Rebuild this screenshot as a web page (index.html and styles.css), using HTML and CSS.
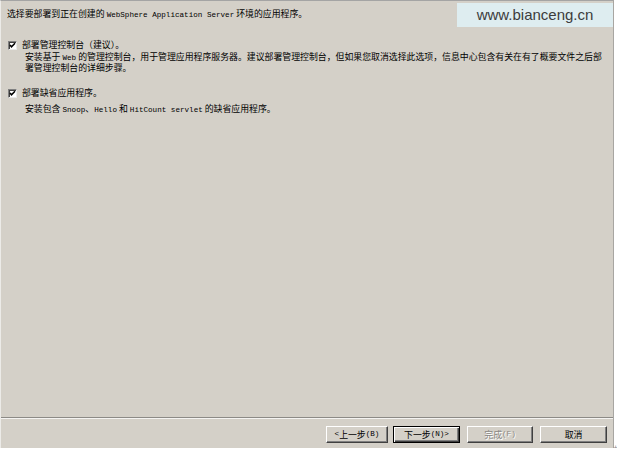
FILE: index.html
```html
<!DOCTYPE html>
<html lang="zh-CN">
<head>
<meta charset="utf-8">
<title>部署应用程序</title>
<link rel="stylesheet" href="styles.css">
</head>
<body>
<div class="dialog">
  <div class="content">
    <p class="intro">选择要部署到正在创建的 <span class="lat">WebSphere Application Server</span> 环境的应用程序。</p>

    <div class="option opt1">
      <div class="row">
        <span class="cb"><svg width="9" height="9" viewBox="0 0 9 9"><path d="M2 4 L3.5 5.8 L7 2.2" fill="none" stroke="#000" stroke-width="1.6"/></svg></span>
        <span class="label">部署管理控制台（建议）。</span>
      </div>
      <p class="desc">安装基于 <span class="lat">Web</span> 的管理控制台，用于管理应用程序服务器。建议部署管理控制台，但如果您取消选择此选项，信息中心包含有关在有了概要文件之后部<br>署管理控制台的详细步骤。</p>
    </div>

    <div class="option opt2">
      <div class="row">
        <span class="cb"><svg width="9" height="9" viewBox="0 0 9 9"><path d="M2 4 L3.5 5.8 L7 2.2" fill="none" stroke="#000" stroke-width="1.6"/></svg></span>
        <span class="label">部署缺省应用程序。</span>
      </div>
      <p class="desc desc2">安装包含 <span class="lat">Snoop</span>、<span class="lat">Hello</span> 和 <span class="lat">HitCount servlet</span> 的缺省应用程序。</p>
    </div>
  </div>

  <div class="footer">
    <button class="btn b1"><span class="lat">&lt;</span>上一步<span class="lat">(B)</span></button>
    <button class="btn b2 default">下一步<span class="lat">(N)&gt;</span></button>
    <button class="btn b3" disabled>完成<span class="lat">(F)</span></button>
    <button class="btn b4">取消</button>
  </div>

  <div class="watermark">www.bianceng.cn</div>
  <span class="grip">+</span>
</div>
</body>
</html>
```

FILE: styles.css
```css
html, body {
  margin: 0;
  padding: 0;
  background: #ffffff;
}

body {
  font-family: "Noto Sans CJK SC", "Liberation Sans", sans-serif;
  font-size: 8.9px;
  color: #000;
}

.dialog {
  position: relative;
  box-sizing: border-box;
  width: 614px;
  height: 448px;
  background: #d4d0c8;
  border-top: 1px solid #a4a4a4;
  border-left: 1px solid #ecebe8;
  border-right: 1px solid #a8a6a2;
  display: flex;
  flex-direction: column;
}

.lat {
  font-family: "Liberation Mono", monospace;
  font-size: 7.6px;
}

.content {
  flex: 1;
  padding: 8px 0 0 6px;
}

p {
  margin: 0;
}

.intro {
  line-height: 10px;
  white-space: nowrap;
}

.option .row {
  display: flex;
  align-items: center;
  height: 10px;
  line-height: 10px;
}

.opt1 {
  margin-top: 20px;
}

.opt2 {
  margin-top: 16px;
}

.cb {
  box-sizing: border-box;
  width: 9px;
  height: 9px;
  margin-left: 1px;
  background: #fff;
  border-top: 1px solid #808080;
  border-left: 1px solid #808080;
  border-right: 1px solid #e8e8e8;
  border-bottom: 1px solid #e8e8e8;
  box-shadow: inset 1px 1px 0 #404040;
  display: flex;
  align-items: center;
  justify-content: center;
  overflow: hidden;
}

.cb svg {
  display: block;
  flex: none;
}

.label {
  margin-left: 5px;
}

.desc {
  margin-top: 2px;
  padding-left: 18px;
  line-height: 9px;
  white-space: nowrap;
}

.desc2 {
  margin-top: 6px;
  line-height: 10px;
}

.footer {
  height: 31px;
  box-sizing: border-box;
  border-top: 1px solid #8c8a86;
  box-shadow: inset 0 1px 0 #f4f3f1;
  display: flex;
  align-items: flex-start;
  padding: 8px 0 0 325px;
}

.btn {
  box-sizing: border-box;
  height: 17px;
  padding: 0;
  margin: 0;
  background: #d4d0c8;
  font-family: "Noto Sans CJK SC", "Liberation Sans", sans-serif;
  font-size: 8.9px;
  color: #000;
  line-height: 13px;
  border-top: 1px solid #ffffff;
  border-left: 1px solid #ffffff;
  border-right: 1px solid #404040;
  border-bottom: 1px solid #404040;
  box-shadow: inset -1px -1px 0 #808080;
  display: flex;
  align-items: center;
  justify-content: center;
}

.b1 { width: 62px; }
.b2 { width: 67px; margin-left: 5px; }
.b3 { width: 66px; margin-left: 7px; }
.b4 { width: 67px; margin-left: 7px; }

.btn.default {
  border: 1px solid #000;
  box-shadow: inset 1px 1px 0 #fff, inset -1px -1px 0 #404040, inset -2px -2px 0 #808080;
}

.btn:disabled {
  color: #8a8884;
  text-shadow: 1px 1px 0 #ffffff;
}

.watermark {
  position: absolute;
  top: 2px;
  right: 0;
  width: 156px;
  height: 24px;
  background: #deedf0;
  color: #3c3c3c;
  font-family: "Liberation Sans", Arial, sans-serif;
  font-size: 15px;
  line-height: 24px;
  text-align: center;
}

.grip {
  position: absolute;
  right: -5px;
  bottom: -4px;
  font-family: "Liberation Sans", sans-serif;
  font-size: 8px;
  line-height: 8px;
  color: #8a8a8a;
}
```
